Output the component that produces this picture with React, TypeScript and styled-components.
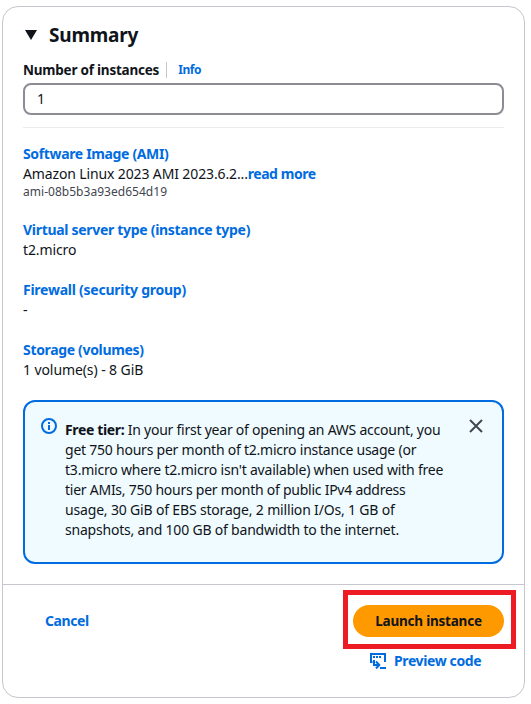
import React from "react";
import styled, { createGlobalStyle } from "styled-components";

const GlobalStyle = createGlobalStyle`
  * { box-sizing: border-box; }
  body {
    margin: 0;
    background: #fff;
    color: #0f141a;
    font: 400 14px/20px "Noto Sans", "Open Sans", sans-serif;
  }
`;

const Card = styled.section`
  width: 523px;
  height: 692px;
  margin: 6px 0 0 2px;
  border: 1px solid #c6c6cd;
  border-radius: 16px;
  background: #fff;
  display: flex;
  flex-direction: column;
`;

const Body = styled.div`
  height: 577px;
  padding: 16px 20px 0;
  display: flex;
  flex-direction: column;
`;

const Header = styled.header`
  display: flex;
  align-items: center;
  height: 24px;
  gap: 12px;
  padding-left: 2px;
`;

const Caret = styled.svg`
  width: 12px;
  height: 10px;
  fill: #0f141a;
`;

const Text = styled.span<{ $track?: number }>`
  white-space: pre;
  letter-spacing: ${(p) => p.$track ?? 0}px;
`;

const Strong = styled(Text)`
  font-weight: 700;
`;

const CompactStrong = styled(Strong)`
  font-size: 13.5px;
`;

const Title = styled.h2`
  margin: 0;
  font-size: 19px;
  font-weight: 700;
  line-height: 24px;
  letter-spacing: -0.2px;
`;

const LinkText = styled(Strong)`
  color: #006ce0;
`;

const InfoLink = styled(LinkText)`
  font-size: 12px;
  line-height: 16px;
`;

const LabelRow = styled.div`
  display: flex;
  align-items: center;
  height: 20px;
  margin-top: 13px;
`;

const LabelDivider = styled.div`
  width: 1px;
  height: 16px;
  margin: 0 11px 0 7px;
  background: #c6c6cd;
`;

const NumberField = styled.div`
  display: flex;
  align-items: center;
  height: 32px;
  margin-top: 3px;
  padding: 0 12px;
  border: 2px solid #8c8c94;
  border-radius: 8px;
`;

const Rule = styled.div`
  height: 1px;
  margin: 12px 0 16px;
  background: #ebebf0;
`;

const Details = styled.div`
  display: flex;
  flex-direction: column;
  gap: 20px;
`;

const Detail = styled.div`
  display: flex;
  flex-direction: column;
`;

const Line = styled.div`
  display: flex;
  height: 20px;
`;

const Small = styled(Text)`
  height: 16px;
  font-size: 12px;
  line-height: 16px;
  color: #424650;
`;

const Notice = styled.div`
  display: flex;
  height: 164px;
  margin-top: 20px;
  padding: 16px 18px 0 16px;
  border: 2px solid #006ce0;
  border-radius: 12px;
  background: #f0fbff;
`;

const NoticeIcon = styled.svg`
  flex: none;
  width: 16px;
  height: 16px;
  fill: none;
  stroke: #006ce0;
  stroke-width: 2;
`;

const NoticeText = styled.div`
  flex: 1;
  min-width: 0;
  margin: 2px 0 0 8px;
`;

const CloseIcon = styled.svg`
  flex: none;
  width: 16px;
  height: 16px;
  fill: none;
  stroke: #424650;
  stroke-width: 2;
`;

const Footer = styled.footer`
  display: flex;
  justify-content: space-between;
  flex: 1;
  padding: 20px 20px 0 42px;
  border-top: 1px solid #c6c6cd;
`;

const Cancel = styled(LinkText)`
  line-height: 32px;
`;

const Actions = styled.div`
  display: flex;
  flex-direction: column;
  gap: 14px;
  width: 151px;
`;

const LaunchWrap = styled.div`
  position: relative;
`;

const LaunchButton = styled.div`
  display: flex;
  align-items: center;
  justify-content: center;
  height: 32px;
  border-radius: 16px;
  background: #ff9900;
`;

const Highlight = styled.div`
  position: absolute;
  inset: -15px -12px -12px -10px;
  border: 5px solid #ed1c24;
`;

const Preview = styled.div`
  display: flex;
  align-items: center;
  gap: 8px;
  padding-left: 17px;
`;

const PreviewIcon = styled.svg`
  width: 16px;
  height: 16px;
  fill: none;
  stroke: #006ce0;
  stroke-width: 2;
`;

const noticeLines: { text: string; track: number }[] = [
  { text: "get 750 hours per month of t2.micro instance usage (or", track: -0.23 },
  { text: "t3.micro where t2.micro isn't available) when used with free", track: -0.2 },
  { text: "tier AMIs, 750 hours per month of public IPv4 address", track: -0.25 },
  { text: "usage, 30 GiB of EBS storage, 2 million I/Os, 1 GB of", track: -0.17 },
  { text: "snapshots, and 100 GB of bandwidth to the internet.", track: -0.2 },
];

export default function App() {
  return (
    <>
      <GlobalStyle />
      <Card>
        <Body>
          <Header>
            <Caret viewBox="0 0 12 10"><path d="M0 0h12L6 10z" /></Caret>
            <Title>Summary</Title>
          </Header>
          <LabelRow>
            <CompactStrong $track={-0.22}>Number of instances</CompactStrong>
            <LabelDivider />
            <InfoLink $track={-0.4}>Info</InfoLink>
          </LabelRow>
          <NumberField>1</NumberField>
          <Rule />
          <Details>
            <Detail>
              <Line><LinkText $track={-0.35}>Software Image (AMI)</LinkText></Line>
              <Line>
                <Text $track={-0.13}>Amazon Linux 2023 AMI 2023.6.2...</Text>
                <LinkText $track={-0.45}>read more</LinkText>
              </Line>
              <Small $track={0.03}>ami-08b5b3a93ed654d19</Small>
            </Detail>
            <Detail>
              <Line><LinkText $track={-0.3}>Virtual server type (instance type)</LinkText></Line>
              <Line><Text $track={-0.12}>t2.micro</Text></Line>
            </Detail>
            <Detail>
              <Line><LinkText $track={-0.25}>Firewall (security group)</LinkText></Line>
              <Line><Text>-</Text></Line>
            </Detail>
            <Detail>
              <Line><LinkText $track={-0.33}>Storage (volumes)</LinkText></Line>
              <Line><Text $track={-0.09}>1 volume(s) - 8 GiB</Text></Line>
            </Detail>
          </Details>
          <Notice>
            <NoticeIcon viewBox="0 0 16 16">
              <circle cx="8" cy="8" r="7" />
              <path d="M8 4v2M8 7v5" />
            </NoticeIcon>
            <NoticeText>
              <Line>
                <Strong $track={-0.35}>Free tier:</Strong>
                <Text $track={-0.24}> In your first year of opening an AWS account, you</Text>
              </Line>
              {noticeLines.map((l) => (
                <Line key={l.text}><Text $track={l.track}>{l.text}</Text></Line>
              ))}
            </NoticeText>
            <CloseIcon viewBox="0 0 16 16"><path d="M2 2l12 12M14 2L2 14" /></CloseIcon>
          </Notice>
        </Body>
        <Footer>
          <Cancel $track={-0.42}>Cancel</Cancel>
          <Actions>
            <LaunchWrap>
              <LaunchButton><CompactStrong $track={-0.22}>Launch instance</CompactStrong></LaunchButton>
              <Highlight />
            </LaunchWrap>
            <Preview>
              <PreviewIcon viewBox="0 0 16 16">
                <path d="M2.500 9H1V1h14v8M10 15h6M4 7v5h5M6 8.500L9.300 12 6 15.500" />
                <path d="M3 4h2M6 4h2M9 4h2" />
              </PreviewIcon>
              <LinkText $track={-0.38}>Preview code</LinkText>
            </Preview>
          </Actions>
        </Footer>
      </Card>
    </>
  );
}
